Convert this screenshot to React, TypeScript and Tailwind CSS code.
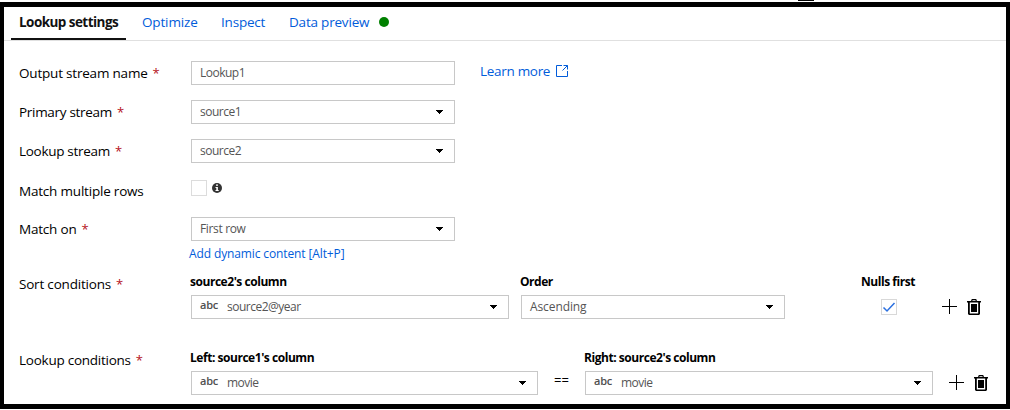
import React from "react";

type LabelProps = { text: string; required?: boolean; spacing?: string };

function Label({ text, required, spacing = "tracking-[-0.2px]" }: LabelProps) {
  return (
    <div className="flex h-6 w-[172px] shrink-0 items-center text-[13.5px] leading-4 text-black">
      <span className={spacing}>{text}</span>
      {required && <span className="ml-[5px] text-[13px] text-[#b5121b]">*</span>}
    </div>
  );
}

function Caret() {
  return (
    <svg className="mr-px shrink-0" width="7" height="4" viewBox="0 0 7 4" shapeRendering="crispEdges">
      <path d="M0 0h7v1H0zM1 1h5v1H1zM2 2h3v1H2zM3 3h1v1H3z" fill="#000" />
    </svg>
  );
}

type FieldProps = { width: string; value: string; abc?: boolean; select?: boolean; spacing?: string };

function Field({ width, value, abc, select = true, spacing = "tracking-[-0.5px]" }: FieldProps) {
  return (
    <div className={`${width} flex h-6 shrink-0 items-center border border-[#c8c8c8] bg-white pr-[10px] pl-2 text-xs leading-4 text-[#555]`}>
      {abc && <span className="mb-[5px] w-[27px] text-[11px] leading-4 font-semibold tracking-[-0.2px] text-[#505050]">abc</span>}
      <span className={`flex-1 ${spacing}`}>{value}</span>
      {select && <Caret />}
    </div>
  );
}

function ColumnHeader({ text }: { text: string }) {
  return <div className="mb-[5px] ml-[-1px] pt-0.5 font-bold tracking-[-0.46px] whitespace-nowrap">{text}</div>;
}

function Actions() {
  return (
    <div className="flex items-center gap-[10px]">
      <svg width="15" height="16" viewBox="0 0 15 16" shapeRendering="crispEdges">
        <path d="M7 0h1v15h-1zM0 7h15v1H0z" />
      </svg>
      <svg width="14" height="16" viewBox="0 0 14 16">
        <path d="M4.5 2.5L5.2 .6h3.6l.7 1.9" fill="none" stroke="#000" strokeWidth="1.2" />
        <path d="M0 2h14v1.5H0zM1 3h1.8v11.4h8.4V3H13v12l-1 1H2l-1-1z" />
        <path d="M4 5h6v8H4z" />
      </svg>
    </div>
  );
}

export default function App() {
  return (
    <div className="flex h-[410px] w-[1010px] flex-col overflow-hidden bg-white font-['Open_Sans','Noto_Sans',sans-serif]">
      <div className="ml-[798px] h-px w-4 shrink-0 bg-black" />
      <div className="mt-px flex h-[407px] shrink-0 flex-col border-x-4 border-y-[5px] border-black">
        <div className="flex h-[34px] shrink-0 border-b border-[#e0e0e0] pl-[7px] text-[13.5px] leading-4 text-[#015cda]">
          <div className="h-[33px] w-[115px] border-b-2 border-[#111] pt-[7px] pl-2 font-bold whitespace-nowrap text-[#111]">
            <span className="tracking-[-0.55px]">Lookup settings</span>
          </div>
          <span className="w-[79px] pt-[7px] pl-4 tracking-[-0.15px]">Optimize</span>
          <span className="w-[84px] pt-[7px] pl-4 tracking-[-0.2px]">Inspect</span>
          <span className="w-[80px] pt-[7px] tracking-[-0.2px] whitespace-nowrap">Data preview</span>
          <span className="mt-[10px] ml-[10px] size-[10px] rounded-full bg-[#008000]" />
        </div>

        <div className="mt-5 flex shrink-0 pl-[15px]">
          <Label text="Output stream name" required />
          <Field width="w-[264px]" value="Lookup1" select={false} />
          <div className="ml-[25px] flex h-5 items-center text-[13.5px] leading-4 text-[#015cda]">
            <span className="w-[70px] tracking-[-0.3px] whitespace-nowrap">Learn more</span>
            <svg className="ml-1.5" width="12" height="12" viewBox="0 0 12 12" fill="none" stroke="#015cda">
              <path d="M6 .5H.5v11h11V6M7.5 .5h4v4M11.5 .5L6.5 5.5" />
            </svg>
          </div>
        </div>
        <div className="mt-[15px] flex shrink-0 pl-[15px]">
          <Label text="Primary stream" required spacing="tracking-[-0.3px]" />
          <Field width="w-[264px]" value="source1" />
        </div>
        <div className="mt-[15px] flex shrink-0 pl-[15px]">
          <Label text="Lookup stream" required spacing="tracking-[-0.3px]" />
          <Field width="w-[264px]" value="source2" />
        </div>
        <div className="mt-4 flex h-6 shrink-0 pl-[15px]">
          <Label text="Match multiple rows" />
          <span className="mt-px size-4 border border-[#dcdcdc]" />
          <svg className="mt-1 ml-[5px]" width="10" height="10" viewBox="0 0 10 10">
            <circle cx="5" cy="5" r="5" fill="#333" />
            <path d="M4 1.5h2v1.3H4zM3.5 4h2.4v3h.8v1H3.5V7h.8V5h-.8z" fill="#fff" />
          </svg>
        </div>
        <div className="mt-[14px] flex h-[46px] shrink-0 pl-[15px]">
          <Label text="Match on" required />
          <div>
            <Field width="w-[264px]" value="First row" spacing="tracking-[-0.35px]" />
            <div className="mt-[5px] ml-[-2px] text-xs leading-4 tracking-[-0.12px] whitespace-nowrap text-[#015cda]">Add dynamic content [Alt+P]</div>
          </div>
        </div>

        <div className="mt-[9px] flex h-[47px] shrink-0 pl-[15px] text-xs leading-4">
          <Label text="Sort conditions" required />
          <div className="w-[330px]">
            <ColumnHeader text="source2's column" />
            <Field width="w-[318px]" value="source2@year" abc />
          </div>
          <div className="w-[339px]">
            <ColumnHeader text="Order" />
            <Field width="w-[264px]" value="Ascending" spacing="tracking-[-0.1px]" />
          </div>
          <div className="flex w-[60px] flex-col">
            <div className="mb-[9px] ml-px pt-0.5 font-bold tracking-[-0.46px] whitespace-nowrap">Nulls first</div>
            <span className="ml-[21px] flex size-4 items-center justify-center border border-[#d8d8d8]">
              <svg width="14" height="14" viewBox="0 0 14 14" fill="none" stroke="#2b70e0" strokeWidth="1.5">
                <path d="M1.5 7.5l3.5 3.5L12.5 3" />
              </svg>
            </span>
          </div>
          <div className="mt-[27px] ml-[22px]"><Actions /></div>
        </div>

        <div className="mt-[29px] flex h-[47px] shrink-0 pl-[15px] text-xs leading-4">
          <Label text="Lookup conditions" required spacing="tracking-[-0.25px]" />
          <div className="w-[347px]">
            <ColumnHeader text="Left: source1's column" />
            <Field width="w-[347px]" value="movie" abc />
          </div>
          <span className="w-[47px] pt-[24px] text-center text-[13px] text-black">==</span>
          <div className="w-[348px]">
            <ColumnHeader text="Right: source2's column" />
            <Field width="w-[348px]" value="movie" abc />
          </div>
          <div className="mt-[27px] ml-4"><Actions /></div>
        </div>
      </div>
    </div>
  );
}
